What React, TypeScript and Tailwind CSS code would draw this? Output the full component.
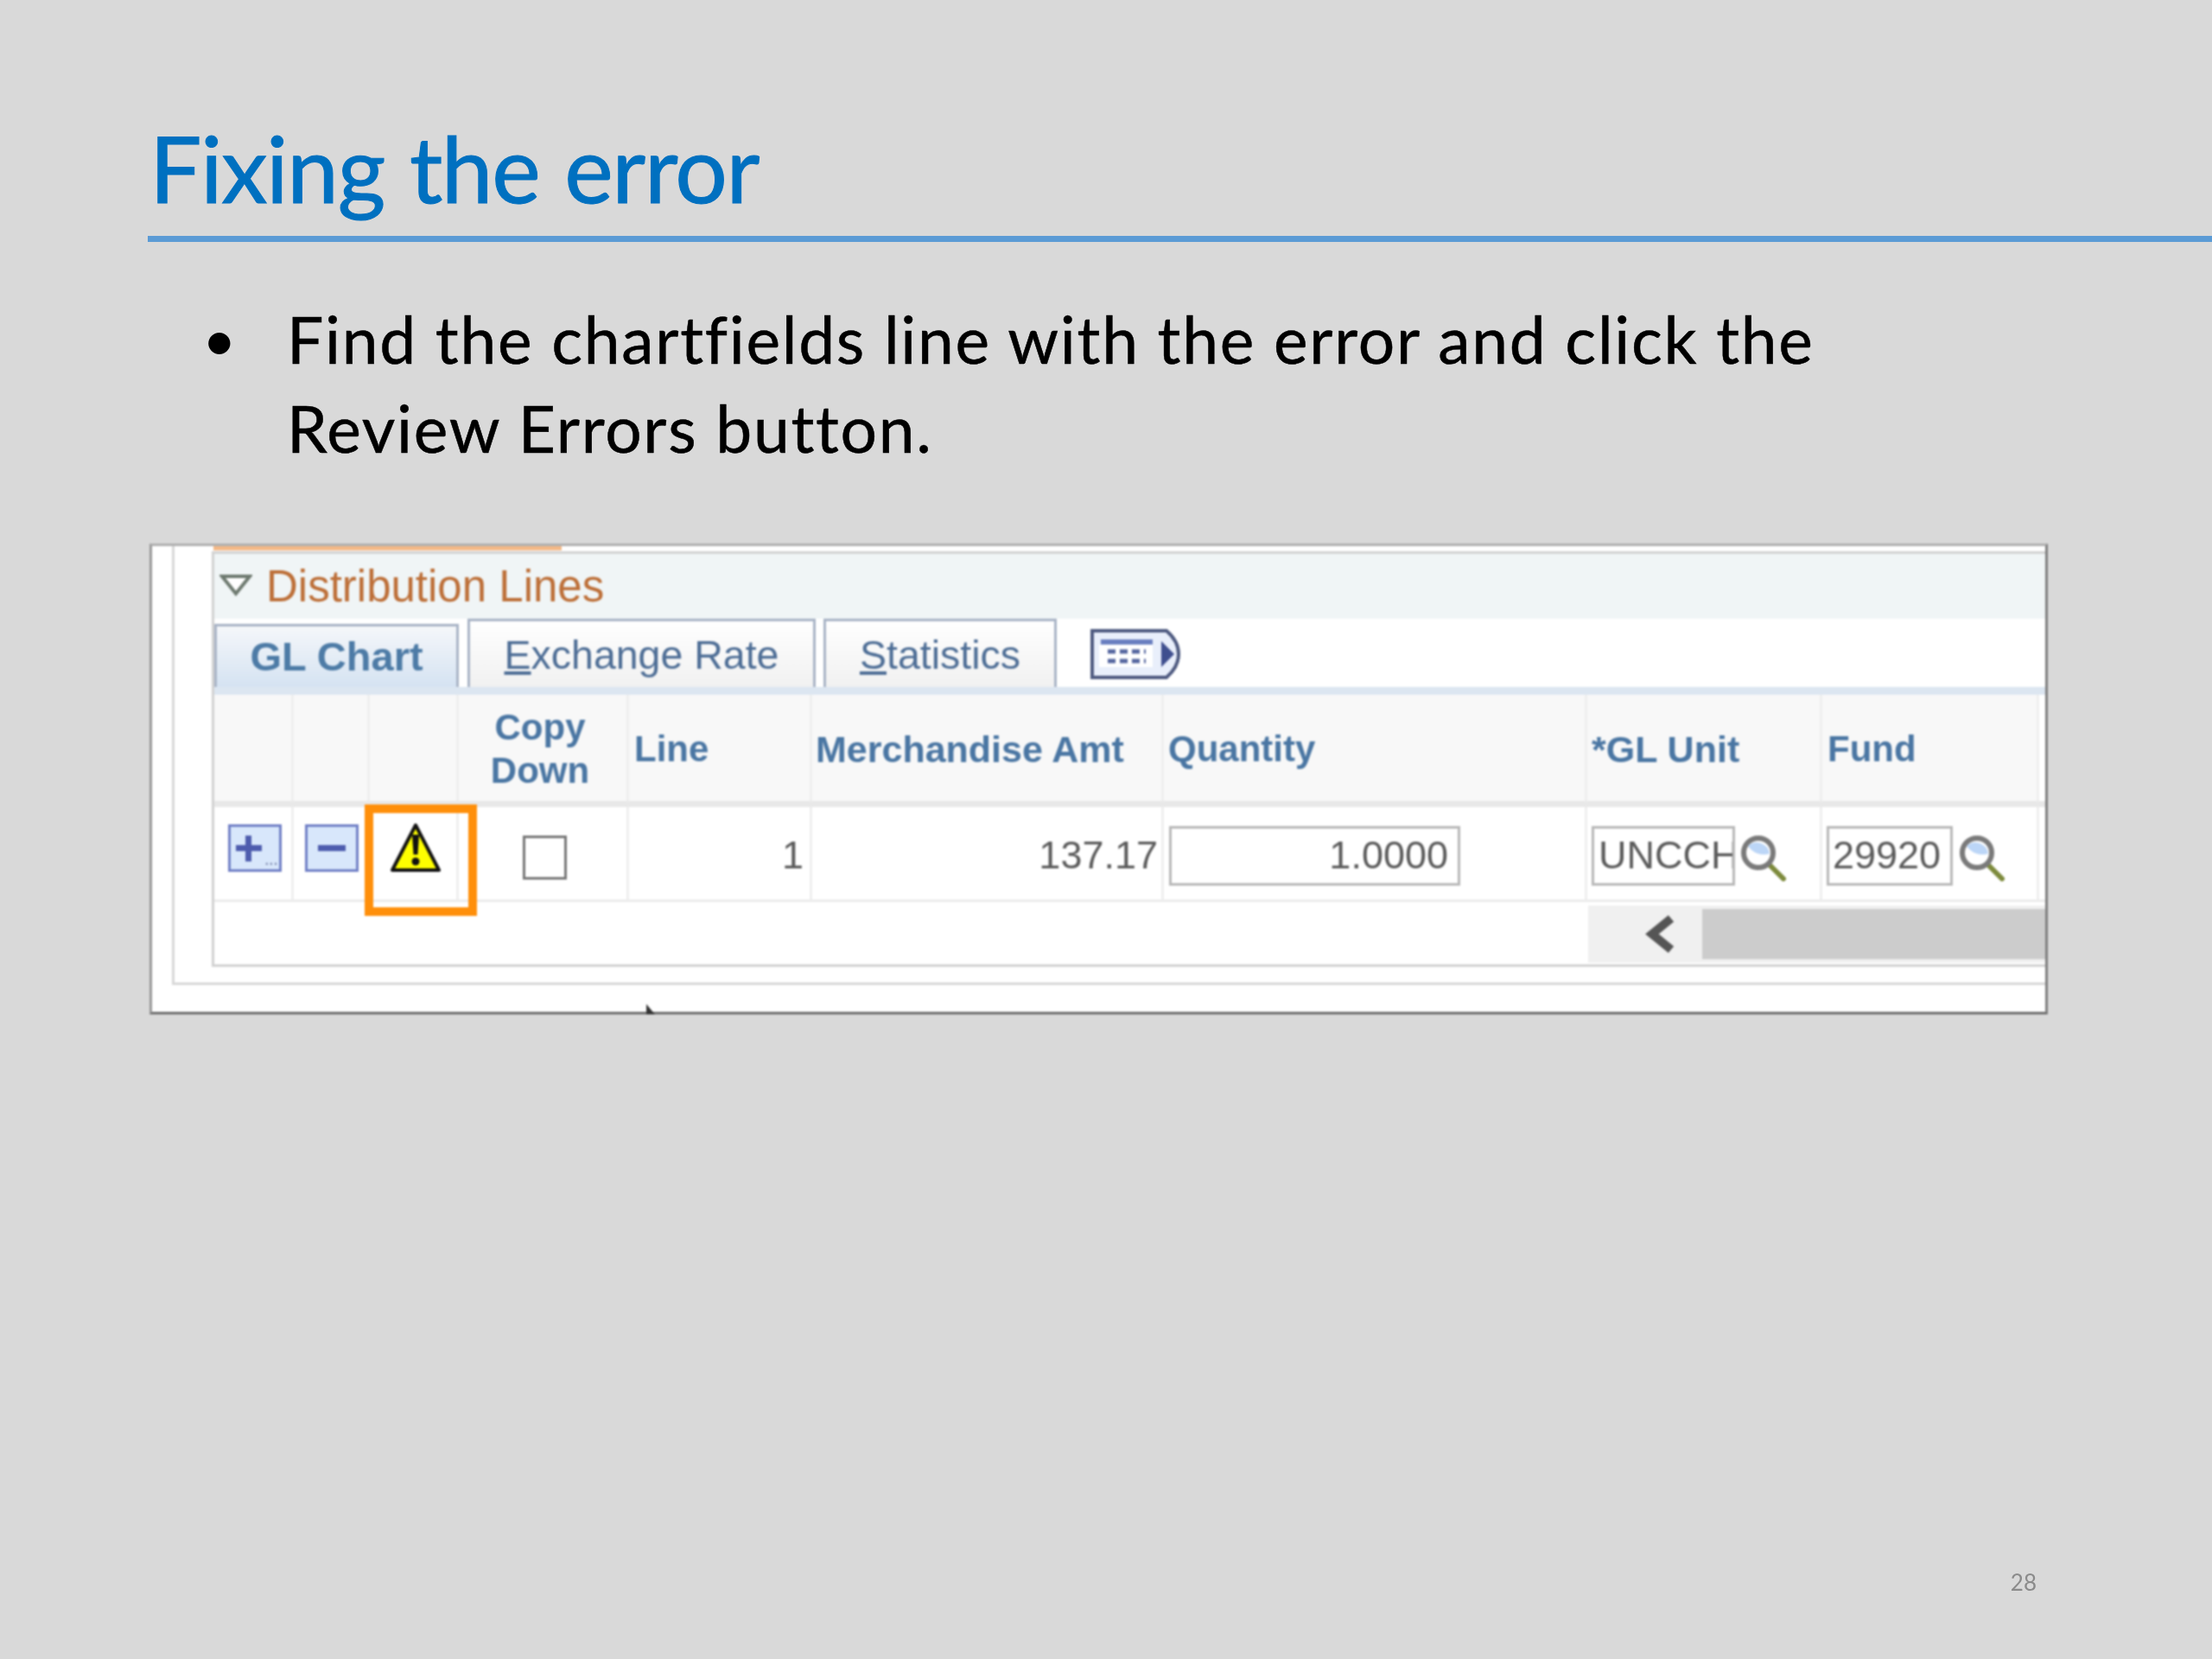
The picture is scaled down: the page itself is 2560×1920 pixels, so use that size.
const ui = "font-['Liberation_Sans',Arial,sans-serif]";

function Magnifier() {
  return (
    <svg width="54" height="54" viewBox="0 0 54 54" className="shrink-0">
      <line x1="32" y1="33" x2="50" y2="51" stroke="#7d8a3c" strokeWidth="6" strokeLinecap="round" />
      <circle cx="21" cy="21" r="17" fill="#ffffff" stroke="#7a7a7a" strokeWidth="6" />
      <path d="M9 13 A15 15 0 0 1 34 22 A22 22 0 0 1 9 13Z" fill="#bcd6f7" />
    </svg>
  );
}

function Warning() {
  return (
    <svg width="60" height="60" viewBox="0 0 60 60">
      <path d="M30 3 L57 55 L3 55 Z" fill="#ffff00" stroke="#111111" strokeWidth="4" strokeLinejoin="round" />
      <path d="M26 14 H34 L32.5 37 H27.5 Z" fill="#111111" />
      <circle cx="30" cy="45" r="4.5" fill="#111111" />
    </svg>
  );
}

function GridIcon() {
  return (
    <svg width="105" height="58" viewBox="0 0 105 58" className="mb-[9px] ml-[39px] shrink-0">
      <path d="M2 2 H88 Q102 14 102 29 Q102 44 88 56 H2 Z" fill="#e9effb" stroke="#4e5a80" strokeWidth="4" />
      <rect x="12" y="12" width="60" height="6" fill="#6a7fc0" />
      <rect x="10" y="18" width="62" height="26" fill="#ffffff" />
      <path d="M20 26 H64 M20 37 H64" stroke="#55669f" strokeWidth="5" strokeDasharray="9 5" />
      <path d="M82 14 L97 29 L82 44 Z" fill="#3f4f8f" />
    </svg>
  );
}

const head = "flex items-center bg-[#f8f8f8] border-r-[3px] border-[#efefef] pt-[2px] font-bold text-[42px] leading-[50px] text-[#4a76a3]";
const cell = "flex border-r-[3px] border-[#efefef] bg-white";
const input = "h-[69px] border-[3px] border-[#b8b8b8] bg-white pt-[1px] text-[45px] leading-[60px] text-[#5b5b5b] overflow-hidden whitespace-nowrap";
const cols = "grid-cols-[92px_88px_103px_197px_212px_407px_490px_272px_251px]";

export default function App() {
  return (
    <div className="relative flex h-[1920px] w-[2560px] flex-col overflow-hidden bg-[#d9d9d9] font-['Lato',sans-serif]">
      <h1 className="ml-[173px] mt-[130px] text-[107px] leading-[128px] font-normal tracking-[-1.4px] [word-spacing:3px] text-[#0070c0] blur-[0.6px] [-webkit-text-stroke:1px_#0070c0]">Fixing the error</h1>
      <div className="ml-[171px] mt-[15px] h-[7px] bg-[#5b9bd5] blur-[0.5px]" />
      <div className="ml-[237px] mt-[61px] flex w-[1950px] text-[75px] leading-[103px] tracking-[1.7px] text-black blur-[0.5px]">
        <span className="w-[95px] shrink-0 text-[58px] font-bold">•</span>
        <p className="[-webkit-text-stroke:0.5px_#000000]">Find the chartfields line with the error and click the<br />Review Errors button.</p>
      </div>

      <div className={`ml-[173px] mt-[82px] h-[545px] w-[2197px] shrink-0 border-[3px] border-l-[#9a9a9a] border-t-[#b0b0b0] border-r-[#7f7f7f] border-b-[#6f6f6f] bg-white ${ui} relative blur-[1px]`}>
        <div className="ml-[23px] h-[508px] border-b-[3px] border-l-[3px] border-[#d8d8d8] pl-[43px]">
          <div className="ml-[2px] h-[5px] w-[403px] bg-[#f3b886]" />
          <div className="mt-[1px] h-[481px] border-b-[3px] border-l-[3px] border-t-[3px] border-[#d2d2d2]">
            <div className="flex h-[75px] items-center bg-[#f0f5f6]">
              <svg width="38" height="26" viewBox="0 0 38 26" className="ml-[6px] mb-[4px] shrink-0">
                <path d="M3 3 H35 L19 23 Z" fill="#ffffff" stroke="#6e7a70" strokeWidth="4" />
              </svg>
              <span className="ml-[16px] text-[51px] leading-none text-[#bd6f38]">Distribution Lines</span>
            </div>

            <div className="flex h-[79px] items-end bg-white">
              <div className="flex h-[73px] w-[283px] items-center justify-center border-x-[3px] border-t-[3px] border-[#a9b4c6] bg-gradient-to-b from-[#f5f7fa] to-[#d5e3f2] text-[47px] font-bold text-[#4d7ba6]">GL Chart</div>
              <div className="ml-[10px] flex h-[79px] w-[403px] items-center justify-center border-x-[3px] border-t-[3px] border-[#a9b4c6] bg-gradient-to-b from-white to-[#f1f1f1] pt-[4px] text-[46.5px] text-[#4e6e96]"><span><span className="underline">E</span>xchange Rate</span></div>
              <div className="ml-[9px] flex h-[79px] w-[270px] items-center justify-center border-x-[3px] border-t-[3px] border-[#a9b4c6] bg-gradient-to-b from-white to-[#f1f1f1] pt-[4px] text-[46.5px] text-[#4e6e96]"><span><span className="underline">S</span>tatistics</span></div>
              <GridIcon />
            </div>
            <div className="h-[9px] bg-[#dce6f1]" />

            <div className={`grid h-[123px] ${cols}`}>
              <div className={head} />
              <div className={head} />
              <div className={head} />
              <div className={`${head} justify-center pr-[6px] text-center`}>Copy<br />Down</div>
              <div className={`${head} pl-[6px]`}>Line</div>
              <div className={`${head} whitespace-nowrap pl-[4px] text-[43px]`}>Merchandise Amt</div>
              <div className={`${head} pl-[5px] text-[42.5px]`}>Quantity</div>
              <div className={`${head} pl-[5px] text-[43px]`}>*GL Unit</div>
              <div className={`${head} pl-[6px]`}>Fund</div>
            </div>
            <div className="h-[7px] bg-[#e8e8e8]" />

            <div className={`grid h-[107px] ${cols}`}>
              <div className={`${cell} pl-[16px] pt-[20px]`}>
                <div className="relative h-[55px] w-[62px] border-[3px] border-[#7080c6] bg-[#d8e7fb]">
                  <span className="absolute left-[6px] top-[21px] h-[7px] w-[30px] bg-[#4d5cae]" />
                  <span className="absolute left-[17px] top-[10px] h-[30px] w-[7px] bg-[#4d5cae]" />
                  <span className="absolute bottom-[8px] right-[2px] text-[22px] leading-[8px] tracking-[-1px] text-[#7f8ab0]">...</span>
                </div>
              </div>
              <div className={`${cell} pl-[13px] pt-[20px]`}>
                <div className="flex h-[55px] w-[62px] items-center justify-center border-[3px] border-[#7080c6] bg-[#d8e7fb]">
                  <span className="h-[7px] w-[32px] bg-[#4d5cae]" />
                </div>
              </div>
              <div className={`${cell} pl-[23px] pt-[18px]`}><Warning /></div>
              <div className={`${cell} pl-[74px] pt-[33px]`}>
                <div className="h-[51px] w-[51px] border-[3px] border-[#777777] bg-white" />
              </div>
              <div className={`${cell} justify-end pr-[7px] pt-[28px] text-[45px] leading-[56px] text-[#5b5b5b]`}>1</div>
              <div className={`${cell} justify-end pr-[4px] pt-[28px] text-[45px] leading-[56px] text-[#5b5b5b]`}>137.17</div>
              <div className={`${cell} pl-[6px] pt-[22px]`}>
                <div className={`${input} w-[337px] pr-[11px] text-right`}>1.0000</div>
              </div>
              <div className={`${cell} pl-[5px] pt-[22px]`}>
                <div className={`${input} w-[166px] pl-[5px]`}>UNCCH</div>
                <div className="ml-[6px] mt-[10px]"><Magnifier /></div>
              </div>
              <div className={`${cell} pl-[5px] pt-[22px]`}>
                <div className={`${input} w-[146px] pl-[4px]`}>29920</div>
                <div className="ml-[7px] mt-[10px]"><Magnifier /></div>
              </div>
            </div>
            <div className="h-[3px] bg-[#ececec]" />

            <div className="ml-[1590px] mt-[4px] flex h-[66px] bg-[#f0f0f0]">
              <div className="flex w-[132px] items-center pl-[66px]">
                <svg width="36" height="44" viewBox="0 0 36 44">
                  <path d="M30 4 L8 22 L30 40" fill="none" stroke="#555555" strokeWidth="10" />
                </svg>
              </div>
              <div className="my-[4px] flex-1 bg-[#cccccc]" />
            </div>
          </div>
        </div>

        {/* warning highlight, over the grid */}
        <div className="absolute left-[246px] top-[299px] h-[129px] w-[130px] border-[10px] border-[#ff8f0a]" />
        {/* mouse cursor tip */}
        <svg width="12" height="12" viewBox="0 0 12 12" className="absolute left-[571px] top-[530px]">
          <path d="M1 0 L11 12 H1 Z" fill="#333333" />
        </svg>
      </div>

      <div className="mt-auto mb-[76px] mr-[203px] self-end text-[26px] leading-[26px] text-[#8b8b8b] blur-[0.4px]">28</div>
    </div>
  );
}
